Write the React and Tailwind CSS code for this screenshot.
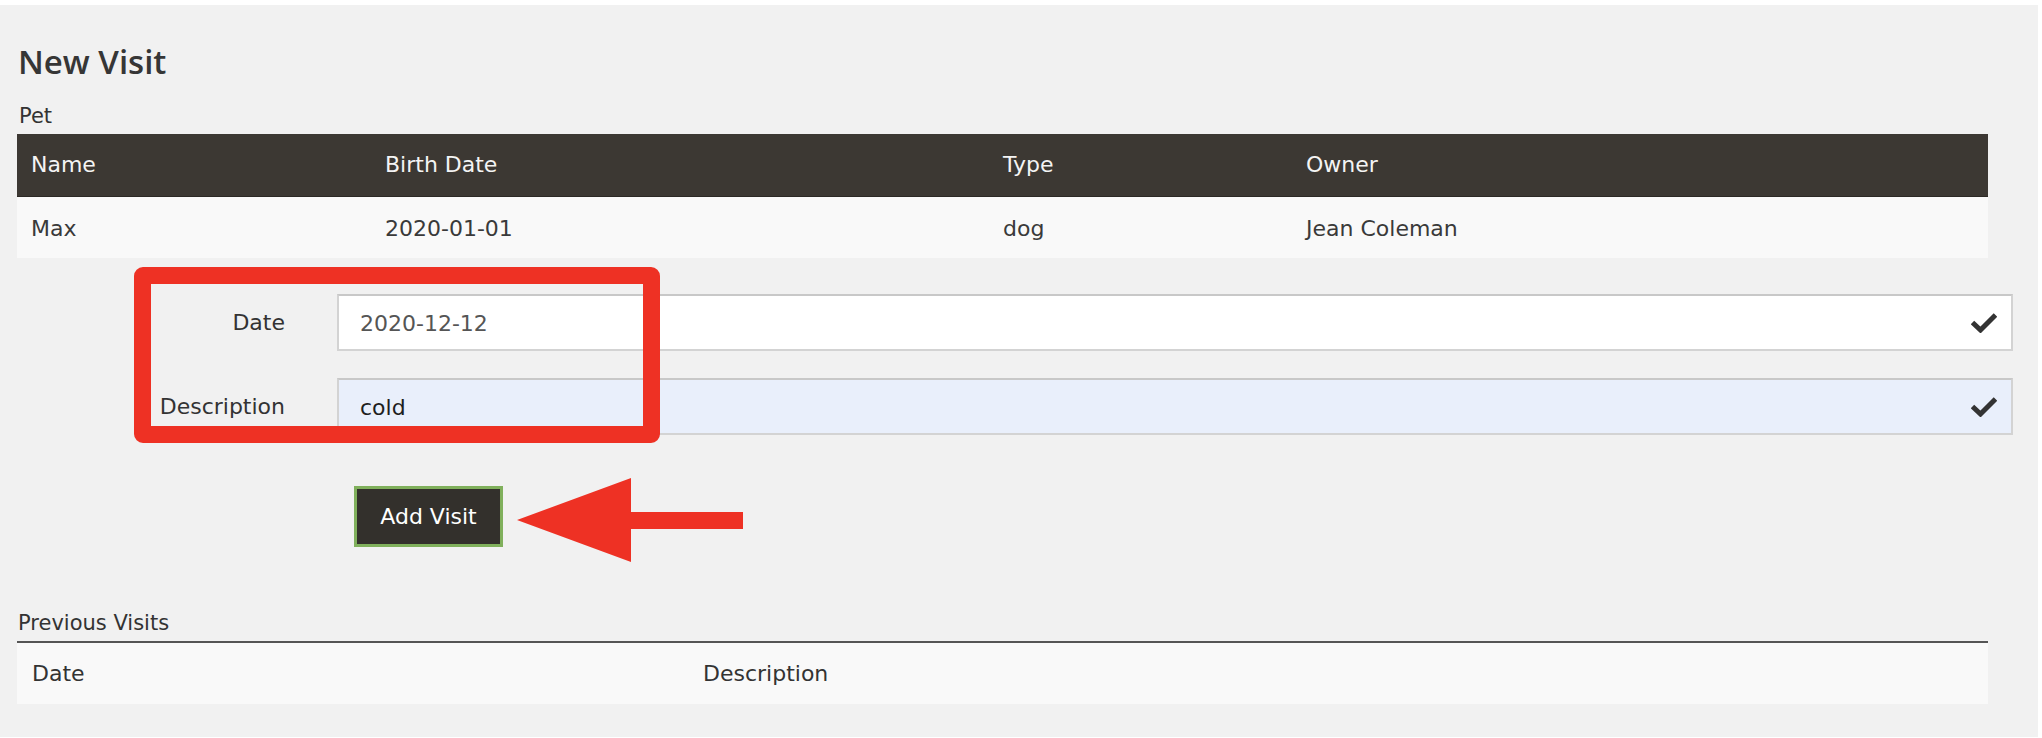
import React from "react";

const pet = { name: "Max", birthDate: "2020-01-01", type: "dog", owner: "Jean Coleman" };

function CheckIcon() {
  return (
    <svg className="w-[26px] h-[20px] shrink-0" viewBox="0 0 26 20" fill="none">
      <path d="M1.5 9.5 L9.5 17 L24.5 2" stroke="#333333" strokeWidth="5" strokeLinejoin="miter" />
    </svg>
  );
}

function FormRow({ label, value, filled }) {
  return (
    <div className="flex items-center">
      <label className="w-[268px] text-right text-[#333333]">{label}</label>
      <div
        className={`ml-[52px] w-[1676px] h-[57px] flex items-center justify-between pl-[21px] pr-[14px] border-2 border-[#d3d3d3] border-t-[#c8c8c8] ${
          filled ? "bg-[#e9effb] text-[#1e1e1e]" : "bg-white text-[#555555]"
        }`}
      >
        <span className="pt-[2px]">{value}</span>
        <CheckIcon />
      </div>
    </div>
  );
}

export default function App() {
  return (
    <div
      className="relative w-[2042px] h-[738px] bg-white overflow-hidden text-[22px] leading-[22px]"
      style={{ fontFamily: '"DejaVu Sans", "Liberation Sans", sans-serif' }}
    >
      <div className="mt-[5px] w-[2038px] h-[732px] bg-[#f1f1f1] pl-[17px] pt-[43px]">
        {/* Header */}
        <h2
          className="text-[33px] leading-[28px] font-semibold text-[#363636] pl-[1px]"
          style={{ fontFamily: '"Open Sans", "DejaVu Sans", sans-serif' }}
        >
          New Visit
        </h2>

        {/* Pet table */}
        <div className="mt-[30px] text-[21px] leading-[21px] text-[#333333] pl-[2px]">Pet</div>
        <div className="mt-[7px] w-[1971px]">
          <div className="grid grid-cols-[354px_618px_303px_1fr] h-[63px] items-center bg-[#3c3833] text-[#f4f4f4] border-b border-[#2c2925]">
            <div className="pl-[14px]">Name</div>
            <div className="pl-[14px]">Birth Date</div>
            <div className="pl-[14px]">Type</div>
            <div className="pl-[14px]">Owner</div>
          </div>
          <div className="grid grid-cols-[354px_618px_303px_1fr] h-[61px] items-center bg-[#f9f9f9] text-[#3a3a3a] pt-[3px]">
            <div className="pl-[14px]">{pet.name}</div>
            <div className="pl-[14px]">{pet.birthDate}</div>
            <div className="pl-[14px]">{pet.type}</div>
            <div className="pl-[14px]">{pet.owner}</div>
          </div>
        </div>

        {/* Visit form */}
        <div className="mt-[36px] flex flex-col gap-[27px]">
          <FormRow label="Date" value="2020-12-12" />
          <FormRow label="Description" value="cold" filled />
        </div>

        <div className="mt-[51px] pl-[337px]">
          <button className="w-[149px] h-[61px] bg-[#33302c] border-[3px] border-[#80b05c] text-white text-[22px]">
            Add Visit
          </button>
        </div>

        {/* Previous visits */}
        <div className="mt-[65px] text-[21px] leading-[22px] text-[#333333] pl-[1px]">Previous Visits</div>
        <div className="mt-[7px] w-[1971px] border-t-2 border-[#555555]">
          <div className="grid grid-cols-[672px_1fr] h-[61px] items-center bg-[#f9f9f9] text-[#333333]">
            <div className="pl-[15px]">Date</div>
            <div className="pl-[14px]">Description</div>
          </div>
        </div>
      </div>

      {/* Annotation: red box */}
      <div className="absolute left-[134px] top-[267px] w-[526px] h-[176px] border-[17px] border-[#ee3124] rounded-[9px]" />

      {/* Annotation: red arrow */}
      <svg className="absolute left-[517px] top-[478px] w-[226px] h-[84px]" viewBox="0 0 226 84">
        <polygon points="0,42 114,0 114,34 226,34 226,51 114,51 114,84" fill="#ee3124" />
      </svg>
    </div>
  );
}
